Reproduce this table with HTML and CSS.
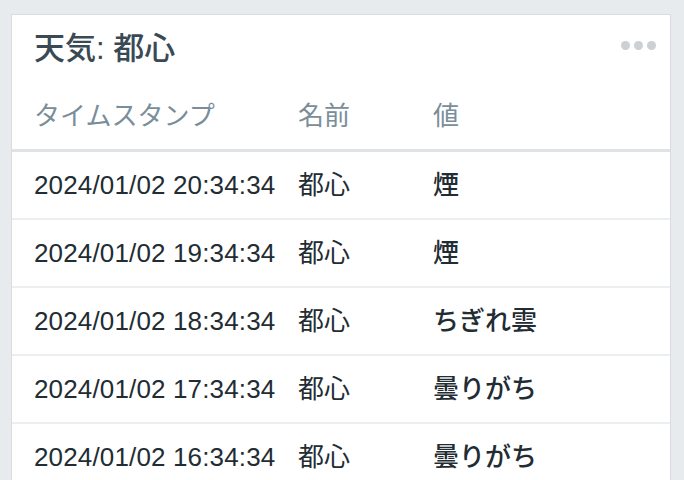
FILE: index.html
```html
<!DOCTYPE html>
<html lang="ja">
<head>
<meta charset="utf-8">
<link rel="stylesheet" href="styles.css">
</head>
<body>
<div class="card">
  <div class="card-head">
    <h1 class="title">天気: 都心</h1>
    <div class="more"><span></span><span></span><span></span></div>
  </div>
  <table class="grid">
    <colgroup><col class="c-ts"><col class="c-name"><col class="c-val"></colgroup>
    <thead>
      <tr><th>タイムスタンプ</th><th>名前</th><th>値</th></tr>
    </thead>
    <tbody>
      <tr><td>2024/01/02 20:34:34</td><td>都心</td><td>煙</td></tr>
      <tr><td>2024/01/02 19:34:34</td><td>都心</td><td>煙</td></tr>
      <tr><td>2024/01/02 18:34:34</td><td>都心</td><td>ちぎれ雲</td></tr>
      <tr><td>2024/01/02 17:34:34</td><td>都心</td><td>曇りがち</td></tr>
      <tr><td>2024/01/02 16:34:34</td><td>都心</td><td>曇りがち</td></tr>
    </tbody>
  </table>
</div>
</body>
</html>
```
FILE: styles.css
```css
html, body {
  margin: 0;
  padding: 0;
  background: #e8ebee;
  font-family: "Liberation Sans", "Noto Sans CJK JP", sans-serif;
  overflow: hidden;
}
.card {
  margin: 14px 0 0 11px;
  width: 658px;
  background: #ffffff;
  border: 1px solid #d8dde1;
  border-bottom: none;
  height: 480px;
}
.card-head {
  display: flex;
  justify-content: space-between;
  align-items: center;
  padding: 16px 14px 0 22px;
}
.title {
  margin: 0;
  font-size: 31px;
  line-height: 36px;
  font-weight: 500;
  color: #3a4a54;
}
.colon {
  font-weight: 700;
}
.more {
  display: flex;
  gap: 4px;
  margin-top: -8px;
}
.more span {
  width: 9px;
  height: 9px;
  border-radius: 50%;
  background: #cbd0d5;
}
.grid {
  width: 100%;
  border-collapse: collapse;
  table-layout: fixed;
  margin-top: 30px;
}
.c-ts { width: 286px; }
.c-name { width: 135px; }
.grid th, .grid td {
  text-align: left;
  padding: 0;
  font-size: 26px;
  line-height: 36px;
  white-space: nowrap;
}
.grid th:first-child, .grid td:first-child {
  padding-left: 22px;
}
.grid td:first-child {
  letter-spacing: 0.15px;
}
.grid th {
  font-weight: 400;
  color: #7a8e9a;
  padding-top: 1px;
  padding-bottom: 15px;
  border-bottom: 3px solid #dfe3e6;
}
.grid td {
  color: #222c33;
  padding-top: 15px;
  padding-bottom: 15px;
  border-bottom: 2px solid #eceff1;
}
.grid td:last-child {
  font-weight: 500;
}
```
